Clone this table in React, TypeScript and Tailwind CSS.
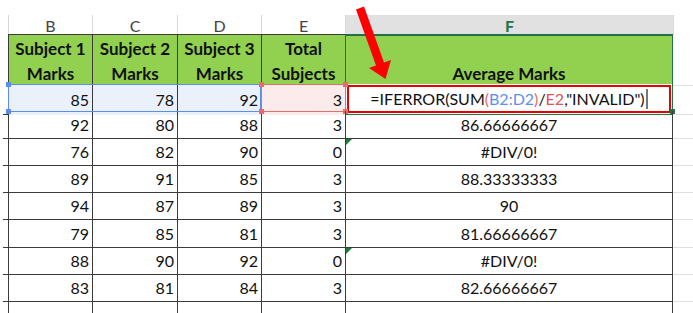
import React from "react";

const rows: { b: number; c: number; d: number; e: number; f: string; h: string; err?: boolean }[] = [
  { b: 92, c: 80, d: 88, e: 3, f: "86.66666667", h: "h-[28px]" },
  { b: 76, c: 82, d: 90, e: 0, f: "#DIV/0!", h: "h-[27px]", err: true },
  { b: 89, c: 91, d: 85, e: 3, f: "88.33333333", h: "h-[27px]" },
  { b: 94, c: 87, d: 89, e: 3, f: "90", h: "h-[27px]" },
  { b: 79, c: 85, d: 81, e: 3, f: "81.66666667", h: "h-[28px]" },
  { b: 88, c: 90, d: 92, e: 0, f: "#DIV/0!", h: "h-[27px]", err: true },
  { b: 83, c: 81, d: 84, e: 3, f: "82.66666667", h: "h-[27px]" },
];

const cols = "grid grid-cols-[8px_84px_85px_84px_84px_328px_20px]";

function Handle({ className }: { className: string }) {
  return <div className={`absolute h-[5px] w-[5px] ${className}`} />;
}

export default function App() {
  return (
    <div className="relative h-[313px] w-[693px] overflow-hidden bg-white text-[#111]" style={{ fontFamily: "Lato, 'Open Sans', sans-serif" }}>
      <div className="h-[15px]" />

      {/* column letters */}
      <div className={`${cols} h-[19px] text-[16px] leading-[19px] text-[#444]`}>
        <div />
        {["B", "C", "D", "E"].map(l => (
          <div key={l} className="border-l border-[#d9d9d9] pt-[1px] text-center">{l}</div>
        ))}
        <div className="border-l border-[#d9d9d9] bg-[#e1e1e1] pt-[1px] text-center font-bold text-[#217346]">F</div>
        <div className="border-l border-[#d9d9d9]" />
      </div>

      {/* green header row */}
      <div className={`${cols} h-[50px] text-[17px] font-bold leading-[25px]`}>
        <div />
        {[["Subject 1", "Marks"], ["Subject 2", "Marks"], ["Subject 3", "Marks"], ["Total", "Subjects"]].map(([a, b]) => (
          <div key={a} className="flex flex-col items-center border-l border-t border-[#3b3b3b] bg-[#92d050] pt-[1px]">
            <span>{a}</span>
            <span>{b}</span>
          </div>
        ))}
        <div className="flex items-end justify-center border-x border-t-2 border-[#217346] bg-[#92d050]">
          <span>Average Marks</span>
        </div>
        <div className="border-b border-[#e0e0e0]" />
      </div>

      {/* row 2 with formula */}
      <div className={`${cols} relative h-[27px] text-[16px]`}>
        <div className="flex items-end"><div className="ml-[3px] w-full border-b border-[#3b3b3b]" /></div>
        {[85, 78, 92].map((n, i) => (
          <div key={i} className="flex items-center justify-end border-l border-[#3b3b3b] bg-[#eaf1fb] px-[3px]">{n}</div>
        ))}
        <div className="flex items-center justify-end border-l border-[#3b3b3b] bg-[#fcebeb] px-[3px]">3</div>
        <div className="border-x border-b border-[#217346] bg-white px-[1px] py-[1px]">
          <div className="flex h-full items-center justify-center border-2 border-[#e60000]">
            <span>=IFERROR(SUM</span>
            <span className="text-[#e86a6a]">(</span>
            <span className="text-[#5b8ff0]">B2:D2</span>
            <span className="text-[#e86a6a]">)</span>
            <span>/</span>
            <span className="text-[#e05555]">E2</span>
            <span>,"INVALID")</span>
            <span className="ml-[1px] h-[20px] w-[2px] bg-[#777]" />
          </div>
        </div>
        <div className="border-b border-[#e0e0e0]" />

        {/* range highlight borders */}
        <div className="pointer-events-none absolute left-[8px] top-0 h-[28px] w-[253px] border border-[#5b8def]" />
        <div className="pointer-events-none absolute left-[261px] top-0 h-[28px] w-[85px] border border-[#e66b6b]" />
        <Handle className="left-[6px] top-[-2px] bg-[#5b8def]" />
        <Handle className="left-[6px] top-[25px] bg-[#5b8def]" />
        <Handle className="left-[259px] top-[-2px] bg-[#e66b6b]" />
        <Handle className="left-[259px] top-[25px] bg-[#e66b6b]" />
        <Handle className="left-[343px] top-[-2px] bg-[#e66b6b]" />
        <Handle className="left-[343px] top-[25px] bg-[#e66b6b]" />
        <Handle className="left-[670px] top-[25px] bg-[#217346]" />
      </div>

      {/* data rows */}
      {rows.map((r, i) => (
        <div key={i} className={`${cols} ${r.h} text-[16px]`}>
          <div className="flex items-end"><div className="ml-[3px] w-full border-b border-[#3b3b3b]" /></div>
          {[r.b, r.c, r.d, r.e].map((n, j) => (
            <div key={j} className="flex items-center justify-end border-b border-l border-[#3b3b3b] px-[3px]">{n}</div>
          ))}
          <div className="relative flex items-center justify-center border-x border-b border-[#3b3b3b]">
            {r.err && (
              <svg className="absolute left-0 top-0" width="6" height="6" viewBox="0 0 6 6">
                <polygon points="0,0 6,0 0,6" fill="#1e7b34" />
              </svg>
            )}
            {r.f}
          </div>
          <div className="border-b border-[#e0e0e0]" />
        </div>
      ))}
      <div className={`${cols} h-[12px]`}>
        <div />
        <div className="border-l border-[#3b3b3b]" />
        <div className="border-l border-[#3b3b3b]" />
        <div className="border-l border-[#3b3b3b]" />
        <div className="border-l border-[#3b3b3b]" />
        <div className="border-x border-[#3b3b3b]" />
        <div />
      </div>

      {/* red arrow */}
      <svg className="absolute left-[340px] top-0" width="60" height="85" viewBox="0 0 60 85">
        <polygon points="16,9.5 24,6.5 44,62.5 51,60 45.5,79 29,68 36,65.5" fill="#ff0000" />
      </svg>
    </div>
  );
}
